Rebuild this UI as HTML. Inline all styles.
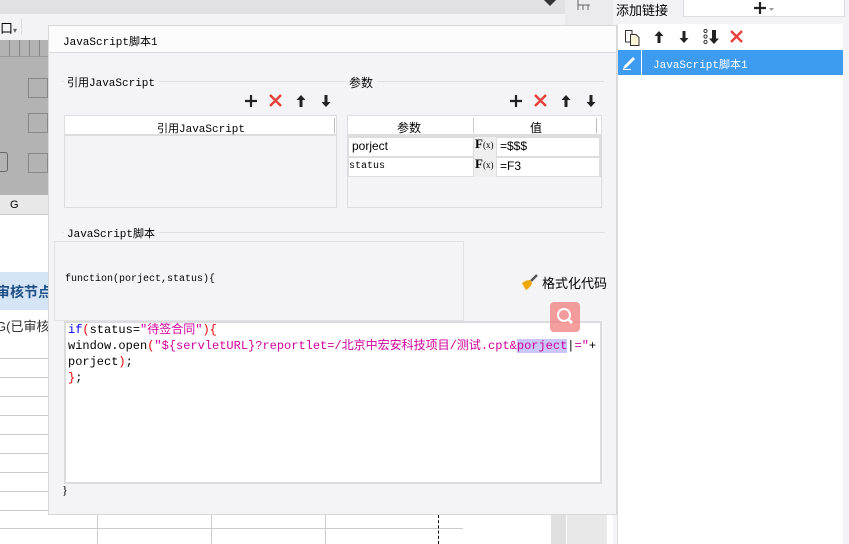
<!DOCTYPE html>
<html><head><meta charset="utf-8"><style>
*{margin:0;padding:0;box-sizing:border-box}
body{width:849px;height:544px;overflow:hidden;background:#fff;position:relative;font-family:"Liberation Sans","Noto Sans CJK SC",sans-serif;font-size:12px;color:#000}
.a{position:absolute}
.mono{font-family:"Liberation Mono","Noto Sans CJK SC",monospace}
.ser{font-family:"Liberation Serif","Noto Serif CJK SC",serif}
svg{position:absolute;overflow:visible}
</style></head><body>
<svg width="0" height="0"><defs>
<g id="plus"><path d="M0 6H12M6 0V12" stroke="#222" stroke-width="2.2"/></g>
<g id="x"><path d="M0 0L11 11M11 0L0 11" stroke="#e8403a" stroke-width="2.4"/></g>
<g id="up"><path d="M5 1L0.5 6H3.5V13H6.5V6H9.5Z" fill="#222"/></g>
<g id="dn"><path d="M5 13L0.5 8H3.5V1H6.5V8H9.5Z" fill="#222"/></g>
</defs></svg>
<!-- top bars -->
<div class="a" style="left:0;top:0;width:565px;height:14px;background:#e1e1e3"></div>
<div class="a" style="left:0;top:14px;width:565px;height:26px;background:#f3f3f5"></div>
<div class="a" style="left:0;top:18px;font-size:13px">口<span style="font-size:8px;color:#666">▾</span></div>
<div class="a" style="left:21px;top:19px;width:1px;height:16px;background:#ddd"></div>
<div class="a" style="left:0;top:40px;width:48px;height:155px;background:#b3b3b3"></div>
<div class="a" style="left:0;top:40px;width:48px;height:17px;border-bottom:1px solid #999;background:repeating-linear-gradient(90deg,#b3b3b3 0 9px,#888 9px 10px)"></div>
<div class="a" style="left:28px;top:78px;width:20px;height:20px;border:1px solid #888"></div>
<div class="a" style="left:28px;top:113px;width:20px;height:20px;border:1px solid #888"></div>
<div class="a" style="left:28px;top:153px;width:20px;height:20px;border:1px solid #888"></div>
<div class="a" style="left:-2px;top:152px;width:10px;height:20px;border:1px solid #666;border-radius:3px"></div>
<div class="a" style="left:0;top:195px;width:48px;height:20px;background:#e8e8e8;border-bottom:1px solid #ccc"></div>
<div class="a" style="left:10px;top:199px;font-size:11px">G</div>
<div class="a" style="left:0;top:272px;width:48px;height:38px;background:#d6e5f5"></div>
<div class="a" style="left:-4px;top:282px;font-size:14px;font-weight:bold;color:#1d4f86">审核节点</div>
<div class="a" style="left:-4px;top:316px;font-size:13px;color:#333">G(已审核</div>
<div class="a" style="left:0;top:340px;width:48px;height:204px;background:repeating-linear-gradient(180deg,#fff 0 18px,#ccc 18px 19px)"></div>
<div class="a" style="left:0;top:514px;width:565px;height:30px;background:#fff"></div>
<div class="a" style="left:0;top:528px;width:463px;height:1px;background:#ccc"></div>
<div class="a" style="left:97px;top:515px;width:1px;height:29px;background:#ccc"></div>
<div class="a" style="left:211px;top:515px;width:1px;height:29px;background:#ccc"></div>
<div class="a" style="left:325px;top:515px;width:1px;height:29px;background:#ccc"></div>
<div class="a" style="left:438px;top:515px;width:0;height:29px;border-left:1px dashed #000"></div>
<div class="a" style="left:551px;top:515px;width:15px;height:29px;background:#e0e0e0"></div>
<div class="a" style="left:567px;top:515px;width:40px;height:29px;background:#e8e8e8"></div>
<svg style="left:544px;top:0" width="12" height="6"><path d="M0 0H12L6 6Z" fill="#333"/></svg>
<!-- right gray strip -->
<div class="a" style="left:565px;top:0;width:48px;height:25px;background:#ebebed"></div>
<svg style="left:577px;top:0" width="14" height="10"><path d="M1 0V10M1 5H13M6 5V10M11 5V10" stroke="#666" fill="none"/></svg>
<!-- right panel -->
<div class="a" style="left:613px;top:0;width:236px;height:544px;background:#f3f3f5"></div>
<div class="a" style="left:616px;top:0px;font-size:13px">添加链接</div>
<div class="a" style="left:683px;top:0;width:162px;height:17px;background:#fff;border:1px solid #ddd;border-top:0"></div>
<svg style="left:754px;top:2px" width="20" height="12"><use href="#plus"/><path d="M15 6H20L17.5 9Z" fill="#999"/></svg>
<div class="a" style="left:617px;top:24px;width:226px;height:520px;background:#fff;border-left:1px solid #ddd"></div>
<svg style="left:625px;top:30px" width="15" height="16"><path d="M0.5 0.5H7V12H0.5Z" fill="#fff" stroke="#333"/><path d="M5.5 4.5H11L14 7.5V15.5H5.5Z" fill="#fdf3d6" stroke="#333"/></svg>
<svg style="left:654px;top:30px" width="10" height="14"><use href="#up"/></svg>
<svg style="left:679px;top:30px" width="10" height="14"><use href="#dn"/></svg>
<svg style="left:703px;top:29px" width="18" height="16"><circle cx="2.5" cy="2" r="1.6" fill="none" stroke="#333"/><circle cx="2.5" cy="7.5" r="1.6" fill="none" stroke="#333"/><circle cx="2.5" cy="13" r="1.6" fill="none" stroke="#333"/><path d="M11 15L6 9.5H9V1H13V9.5H16Z" fill="#222"/></svg>
<svg style="left:731px;top:31px" width="12" height="12"><use href="#x"/></svg>
<div class="a" style="left:618px;top:50px;width:225px;height:25px;background:#3d9bf0"></div>
<div class="a" style="left:641px;top:50px;width:1px;height:25px;background:#fff"></div>
<svg style="left:622px;top:54px" width="16" height="16"><path d="M2 12L11 3L13 5L4 14L1 15Z" fill="#fff"/><path d="M1 15.5H9" stroke="#fff"/></svg>
<div class="a mono" style="left:653px;top:56px;font-size:11px;color:#fff">JavaScript脚本1</div>
<!-- dialog -->
<div class="a" style="left:48px;top:25px;width:569px;height:490px;background:#f4f4f6;border:1px solid #d8d8d8"></div>
<div class="a" style="left:49px;top:26px;width:567px;height:27px;background:#fcfcfc;border-bottom:1px solid #d8d8d8"></div>
<div class="a mono" style="left:63px;top:33px;font-size:11px">JavaScript脚本1</div>
<!-- 引用 -->
<div class="a" style="left:62px;top:81px;width:280px;height:1px;background:#e0e0e0"></div>
<div class="a mono" style="left:64px;top:74px;font-size:11px;background:#f4f4f6;padding:0 4px 0 3px">引用JavaScript</div>
<svg style="left:245px;top:95px" width="12" height="12"><use href="#plus"/></svg>
<svg style="left:270px;top:95px" width="12" height="12"><use href="#x"/></svg>
<svg style="left:296px;top:94px" width="10" height="14"><use href="#up"/></svg>
<svg style="left:321px;top:94px" width="10" height="14"><use href="#dn"/></svg>
<div class="a" style="left:64px;top:115px;width:273px;height:93px;border:1px solid #ddd;background:#f4f4f6"></div>
<div class="a" style="left:65px;top:116px;width:271px;height:20px;background:#fff;border-bottom:2px solid #ddd"></div>
<div class="a mono" style="left:157px;top:120px;font-size:11px">引用JavaScript</div>
<div class="a" style="left:334px;top:118px;width:1px;height:15px;background:#bbb"></div>
<!-- 参数 -->
<div class="a" style="left:342px;top:81px;width:262px;height:1px;background:#e0e0e0"></div>
<div class="a" style="left:346px;top:74px;font-size:12px;background:#f4f4f6;padding:0 4px 0 3px">参数</div>
<svg style="left:510px;top:95px" width="12" height="12"><use href="#plus"/></svg>
<svg style="left:535px;top:95px" width="12" height="12"><use href="#x"/></svg>
<svg style="left:561px;top:94px" width="10" height="14"><use href="#up"/></svg>
<svg style="left:586px;top:94px" width="10" height="14"><use href="#dn"/></svg>
<div class="a" style="left:347px;top:115px;width:255px;height:93px;border:1px solid #ddd;background:#f4f4f6"></div>
<div class="a" style="left:348px;top:116px;width:253px;height:20px;background:#fff;border-bottom:2px solid #ddd"></div>
<div class="a" style="left:397px;top:119px;font-size:12px">参数</div>
<div class="a" style="left:530px;top:119px;font-size:12px">值</div>
<div class="a" style="left:473px;top:118px;width:1px;height:15px;background:#ccc"></div>
<div class="a" style="left:596px;top:118px;width:1px;height:15px;background:#bbb"></div>
<div class="a" style="left:348px;top:136px;width:253px;height:41px;background:#ddd"></div>
<div class="a" style="left:349px;top:138px;width:124px;height:18px;background:#fff"></div>
<div class="a" style="left:349px;top:158px;width:124px;height:18px;background:#fff"></div>
<div class="a" style="left:474px;top:137px;width:22px;height:40px;background:#efefef"></div>
<div class="a" style="left:497px;top:138px;width:102px;height:18px;background:#fff"></div>
<div class="a" style="left:497px;top:158px;width:102px;height:18px;background:#fff"></div>
<div class="a" style="left:352px;top:139px;font-size:12px">porject</div>
<div class="a mono" style="left:349px;top:161px;font-size:10px">status</div>
<div class="a ser" style="left:475px;top:136px;font-size:13px;font-weight:bold">F<span style="font-size:9px;font-weight:normal">(x)</span></div>
<div class="a ser" style="left:475px;top:156px;font-size:13px;font-weight:bold">F<span style="font-size:9px;font-weight:normal">(x)</span></div>
<div class="a" style="left:500px;top:139px;font-size:12px">=$$$</div>
<div class="a" style="left:500px;top:159px;font-size:12px">=F3</div>
<!-- script -->
<div class="a" style="left:62px;top:232px;width:543px;height:1px;background:#e0e0e0"></div>
<div class="a mono" style="left:64px;top:225px;font-size:11px;background:#f4f4f6;padding:0 4px 0 3px">JavaScript脚本</div>
<div class="a" style="left:54px;top:241px;width:410px;height:80px;border:1px solid #e2e2e4;background:#f4f4f6"></div>
<div class="a mono" style="left:65px;top:274px;font-size:10px">function(porject,status){</div>
<svg style="left:521px;top:274px" width="18" height="16"><path d="M10 7L16 1" stroke="#555" stroke-width="2.5"/><path d="M1 9Q5 6 9 6L11 9Q10 13 5 16Q3 13 1 9Z" fill="#f0a800"/></svg>
<div class="a" style="left:542px;top:273px;font-size:13px">格式化代码</div>
<div class="a" style="left:64px;top:321px;width:538px;height:163px;background:#fff;border:2px solid #dcdcde"></div>
<div class="a mono" style="left:68px;top:322px;font-size:12px;line-height:16px;white-space:pre"><span style="color:#00f">if</span><span style="color:#e00">(</span>status=<span style="color:#d0009a">"待签合同"</span><span style="color:#e00">){</span>
window.open<span style="color:#e00">(</span><span style="color:#d0009a">"${servletURL}?reportlet=/北京中宏安科技项目/测试.cpt&amp;<span style="background:#c9c6f8">porject</span><span style="color:#000">|</span>="</span>+
porject<span style="color:#e00">)</span>;
<span style="color:#e00">}</span>;</div>
<div class="a" style="left:550px;top:302px;width:30px;height:30px;border-radius:4px;background:rgba(240,120,120,.72)"></div>
<svg style="left:556px;top:307px" width="20" height="20"><circle cx="8" cy="8" r="6" fill="none" stroke="#fff" stroke-width="2"/><path d="M12 12L16 16" stroke="#fff" stroke-width="3"/></svg>
<div class="a ser" style="left:62px;top:483px;font-size:12px">}</div>
</body></html>
